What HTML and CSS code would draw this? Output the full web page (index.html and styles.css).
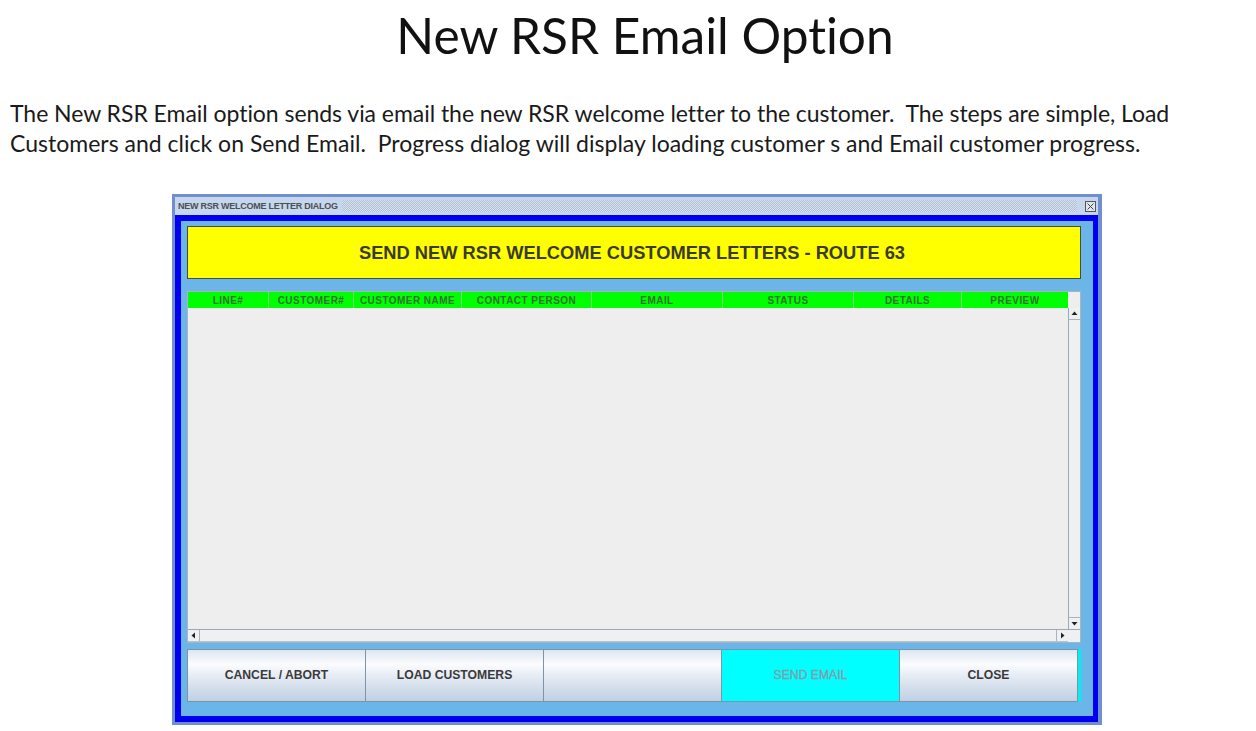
FILE: index.html
```html
<!DOCTYPE html>
<html lang="en">
<head>
<meta charset="utf-8">
<title>New RSR Email Option</title>
<link rel="stylesheet" href="styles.css">
</head>
<body>
<h1 class="title">New RSR Email Option</h1>
<p class="intro"><span class="line-first">The New RSR Email option sends via email the new RSR welcome letter to the customer.&nbsp; The steps are simple, Load</span><br>Customers and click on Send Email.&nbsp; Progress dialog will display loading customer s and Email customer progress.</p>
<div class="window">
  <div class="titlebar">
    <span class="titlebar-text">NEW RSR WELCOME LETTER DIALOG</span>
    <span class="titlebar-dots"></span>
    <svg class="close-icon" width="11" height="11" viewBox="0 0 11 11"><rect x="0.5" y="0.5" width="10" height="10" fill="#dfe6f0" stroke="#555"/><path d="M2.5 2.5L8.5 8.5M8.5 2.5L2.5 8.5" stroke="#444" fill="none"/></svg>
  </div>
  <div class="blue-frame">
    <div class="panel">
      <div class="banner">SEND NEW RSR WELCOME CUSTOMER LETTERS - ROUTE 63</div>
      <div class="table-box">
        <div class="table-main">
          <div class="thead">
            <div class="th w81">LINE#</div>
            <div class="th w85">CUSTOMER#</div>
            <div class="th w108">CUSTOMER NAME</div>
            <div class="th w130">CONTACT PERSON</div>
            <div class="th w131">EMAIL</div>
            <div class="th w131">STATUS</div>
            <div class="th w108">DETAILS</div>
            <div class="th w106">PREVIEW</div>
          </div>
          <div class="tbody"></div>
          <div class="hscroll">
            <div class="arrow-btn"><svg width="5" height="7" viewBox="0 0 5 7"><path d="M4 0.5V6.5L0.5 3.5Z" fill="#222"/></svg></div>
            <div class="track"></div>
            <div class="arrow-btn"><svg width="5" height="7" viewBox="0 0 5 7"><path d="M1 0.5V6.5L4.5 3.5Z" fill="#222"/></svg></div>
          </div>
        </div>
        <div class="vscroll">
          <div class="corner"></div>
          <div class="arrow-btn-v"><svg width="7" height="5" viewBox="0 0 7 5"><path d="M0.5 4H6.5L3.5 0.5Z" fill="#222"/></svg></div>
          <div class="vtrack"></div>
          <div class="arrow-btn-v"><svg width="7" height="5" viewBox="0 0 7 5"><path d="M0.5 1H6.5L3.5 4.5Z" fill="#222"/></svg></div>
          <div class="corner-bottom"></div>
        </div>
      </div>
      <div class="buttons">
        <div class="btn">CANCEL / ABORT</div>
        <div class="btn">LOAD CUSTOMERS</div>
        <div class="btn"></div>
        <div class="btn btn-send">SEND EMAIL</div>
        <div class="btn btn-last">CLOSE</div>
      </div>
    </div>
  </div>
</div>
</body>
</html>
```
FILE: styles.css
```css
* { box-sizing: border-box; }
html, body { margin: 0; padding: 0; }
body {
  width: 1256px;
  height: 731px;
  overflow: hidden;
  background: #fff;
  font-family: Lato, "Open Sans", sans-serif;
  font-variant-ligatures: none;
  color: #1a1a1a;
}
.title {
  margin: 0;
  padding: 5px 0 0 34px;
  height: 72px;
  line-height: 60px;
  font-size: 49.6px;
  font-weight: 400;
  text-align: center;
  color: #111;
}
.intro {
  margin: 0;
  padding: 26px 0 0 10px;
  height: 122px;
  font-size: 23px;
  line-height: 30px;
  letter-spacing: 0.01px;
  white-space: nowrap;
}
.line-first { letter-spacing: -0.045px; }
.window {
  margin-left: 172px;
  width: 930px;
  height: 531px;
  background: #6f8fd0;
  padding: 3px 4px 3px 3px;
  display: flex;
  flex-direction: column;
}
.titlebar {
  height: 18px;
  flex: none;
  background: #c6d6ec;
  display: flex;
  align-items: center;
  padding: 0 2px 0 3px;
  gap: 4px;
}
.titlebar-text {
  font-family: "Liberation Sans", sans-serif;
  font-size: 9px;
  font-weight: 700;
  letter-spacing: -0.25px;
  color: #4a4f55;
  white-space: nowrap;
}
.titlebar-dots {
  flex: 1;
  height: 12px;
  margin-right: 4px;
  background-color: #c6d6ec;
  background-image: repeating-conic-gradient(#aebfd6 0 25%, #d8e2ef 0 50%);
  background-size: 2px 2px;
}
.close-icon { flex: none; }
.blue-frame {
  flex: 1;
  background: #0000f0;
  padding: 6px 5px 6px 6px;
  display: flex;
}
.panel {
  flex: 1;
  background: #6cb5e8;
  padding: 5px 0 0 6px;
  display: flex;
  flex-direction: column;
}
.banner {
  width: 894px;
  height: 53px;
  flex: none;
  background: #ffff00;
  border: 1px solid #3f4f48;
  padding: 1px 4px 0 0;
  display: flex;
  align-items: center;
  justify-content: center;
  font-family: "Liberation Sans", sans-serif;
  font-weight: 700;
  font-size: 18.3px;
  color: #3a3a2a;
}
.table-box {
  margin-top: 12px;
  width: 894px;
  height: 352px;
  flex: none;
  background: #eeeeee;
  border: 1px solid #aab4bf;
  display: flex;
}
.table-main {
  width: 880px;
  display: flex;
  flex-direction: column;
}
.thead { display: flex; height: 16px; flex: none; background: #00ff00; }
.th {
  display: flex;
  align-items: center;
  justify-content: center;
  border-right: 1px solid #7bd67b;
  font-family: "Liberation Sans", sans-serif;
  font-size: 10px;
  font-weight: 700;
  letter-spacing: 0.45px;
  color: #2f742f;
  white-space: nowrap;
}
.th:last-child { border-right: 0; }
.w81 { width: 81px; }
.w85 { width: 85px; }
.w108 { width: 108px; }
.w130 { width: 130px; }
.w131 { width: 131px; }
.w106 { width: 106px; }
.tbody { flex: 1; background: #eeeeee; }
.hscroll {
  height: 13px;
  flex: none;
  display: flex;
  background: #eef0f2;
  border-top: 1px solid #9aa8b8;
  border-bottom: 1px solid #b8c2cc;
}
.arrow-btn {
  width: 12px;
  flex: none;
  display: flex;
  align-items: center;
  justify-content: center;
  border-right: 1px solid #aab4bf;
}
.hscroll .arrow-btn:last-child { border-right: 0; border-left: 1px solid #aab4bf; }
.track { flex: 1; }
.vscroll {
  flex: 1;
  display: flex;
  flex-direction: column;
  background: #eef0f2;
}
.corner { height: 16px; flex: none; background: #eeeeee; }
.arrow-btn-v {
  height: 12px;
  flex: none;
  display: flex;
  align-items: center;
  justify-content: center;
  border-left: 1px solid #9aa8b8;
  border-bottom: 1px solid #aab4bf;
}
.arrow-btn-v:nth-child(4) { border-bottom: 0; border-top: 1px solid #aab4bf; }
.vtrack { flex: 1; border-left: 1px solid #9aa8b8; }
.corner-bottom { height: 13px; flex: none; border-top: 1px solid #9aa8b8; }
.buttons {
  margin-top: 6px;
  width: 894px;
  height: 53px;
  flex: none;
  display: flex;
  background: #00f0f0;
  padding-right: 3px;
}
.btn {
  flex: 1;
  display: flex;
  align-items: center;
  justify-content: center;
  padding-bottom: 1px;
  background: linear-gradient(#dde6f0 0%, #fbfcfe 28%, #e2e9f2 55%, #c0d0e4 100%);
  border: 1px solid #7d93a8;
  border-right: 0;
  font-family: "Liberation Sans", sans-serif;
  font-size: 12.2px;
  font-weight: 700;
  color: #3a3a3a;
}
.btn-last { border-right: 1px solid #7d93a8; }
.btn-send { background: #00ffff; color: #8a9aa8; font-weight: 400; -webkit-text-stroke: 0.3px #8a9aa8; }
```
